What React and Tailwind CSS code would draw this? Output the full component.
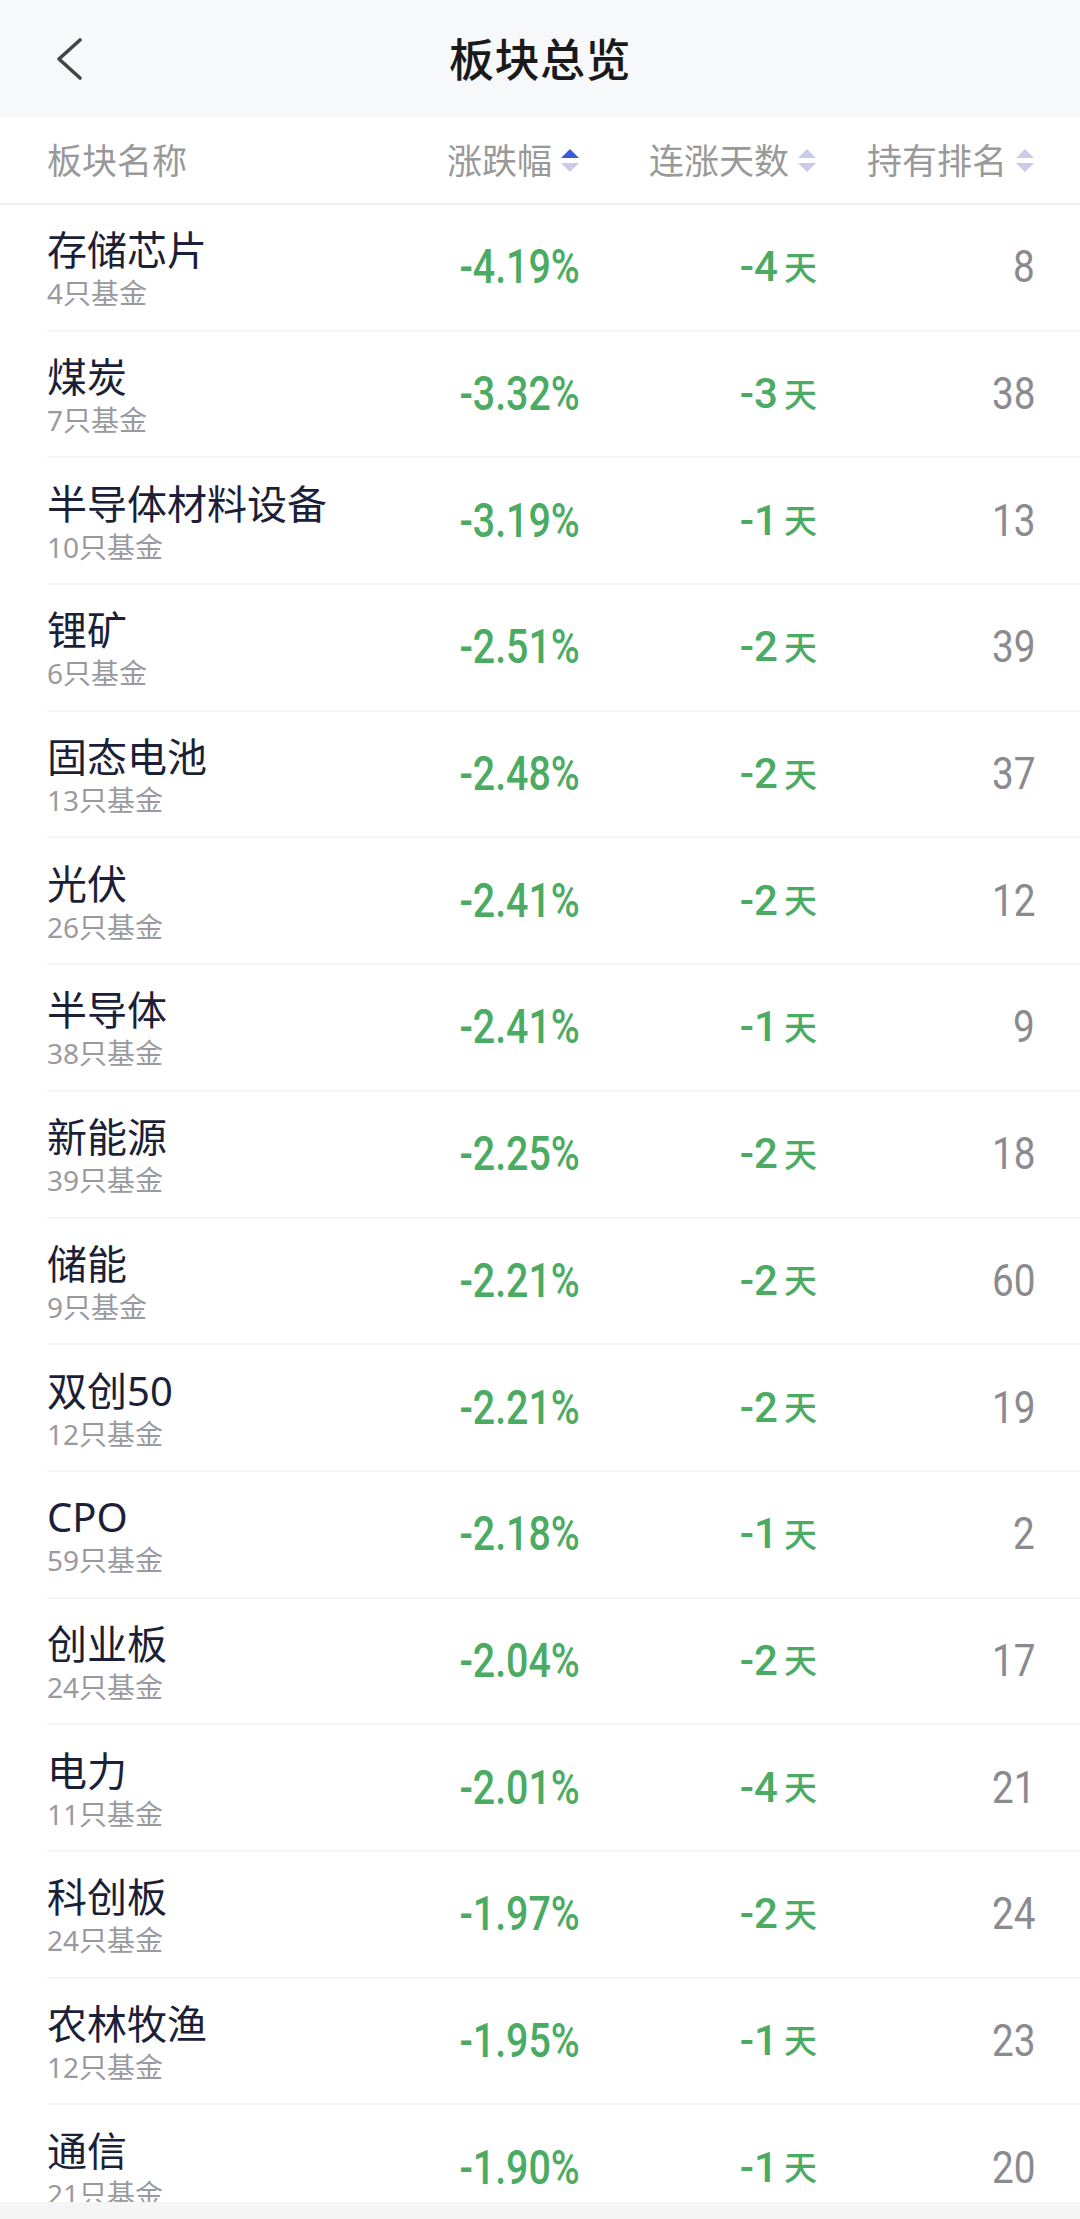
import React from "react";

const rows = [
  ["存储芯片", "4只基金", "-4.19%", "-4", "8"],
  ["煤炭", "7只基金", "-3.32%", "-3", "38"],
  ["半导体材料设备", "10只基金", "-3.19%", "-1", "13"],
  ["锂矿", "6只基金", "-2.51%", "-2", "39"],
  ["固态电池", "13只基金", "-2.48%", "-2", "37"],
  ["光伏", "26只基金", "-2.41%", "-2", "12"],
  ["半导体", "38只基金", "-2.41%", "-1", "9"],
  ["新能源", "39只基金", "-2.25%", "-2", "18"],
  ["储能", "9只基金", "-2.21%", "-2", "60"],
  ["双创50", "12只基金", "-2.21%", "-2", "19"],
  ["CPO", "59只基金", "-2.18%", "-1", "2"],
  ["创业板", "24只基金", "-2.04%", "-2", "17"],
  ["电力", "11只基金", "-2.01%", "-4", "21"],
  ["科创板", "24只基金", "-1.97%", "-2", "24"],
  ["农林牧渔", "12只基金", "-1.95%", "-1", "23"],
  ["通信", "21只基金", "-1.90%", "-1", "20"],
];

const CJK = "font-['Noto_Sans','Noto_Sans_CJK_SC',sans-serif]";
const NUM = "font-['Roboto','Noto_Sans_CJK_SC',sans-serif]";

function SortIcon({ active }) {
  return (
    <svg width="20" height="24" viewBox="0 0 20 24" className="ml-[8px] shrink-0">
      <polygon points="1,9 10,0 19,9" fill={active ? "#3d5bd6" : "#c9cbe7"} />
      <polygon points="1,14 19,14 10,23" fill="#c9cbe7" />
    </svg>
  );
}

export default function App() {
  return (
    <div className={`w-[1080px] bg-white ${CJK}`}>
      {/* Top bar */}
      <div className="h-[118px] bg-[#f7f8fa] grid grid-cols-[1fr_auto_1fr] items-center">
        <div className="pl-[56px] flex items-center">
          <svg width="28" height="42" viewBox="0 0 28 42">
            <polyline
              points="24,2 3,21 24,40"
              fill="none"
              stroke="#454545"
              strokeWidth="3.6"
              strokeLinecap="round"
              strokeLinejoin="round"
            />
          </svg>
        </div>
        <div className="text-[45px] leading-none font-medium text-[#1a1a1a] tracking-[0.5px]">板块总览</div>
        <div />
      </div>

      {/* Column header */}
      <div className="h-[87px] grid grid-cols-[1fr_200px_237px_218px] items-center pl-[47px] pr-[45px] border-b-2 border-[#f1f1f3] text-[35px] text-[#999999] leading-none">
        <div>板块名称</div>
        <div className="flex items-center justify-end">
          <span>涨跌幅</span>
          <SortIcon active />
        </div>
        <div className="flex items-center justify-end">
          <span>连涨天数</span>
          <SortIcon />
        </div>
        <div className="flex items-center justify-end">
          <span>持有排名</span>
          <SortIcon />
        </div>
      </div>

      {/* Rows */}
      <div className="pl-[47px]">
        {rows.map(([name, sub, pct, days, rank], i) => (
          <div
            key={i}
            className="h-[126.7px] grid grid-cols-[1fr_200px_237px_218px] items-center pr-[45px] border-b-2 border-[#f5f5f7]"
          >
            <div className="flex flex-col pt-[4px]">
              <div className="text-[40px] leading-[46px] text-[#1c1f38]">{name}</div>
              <div className="text-[28px] leading-[36px] text-[#9a9a9e] mt-[2px]">{sub}</div>
            </div>
            <div className="text-right">
              <span className={`inline-block origin-right scale-x-[0.82] text-[48px] leading-none font-medium text-[#4bab63] ${NUM}`}>
                {pct}
              </span>
            </div>
            <div className="flex items-center justify-end text-[#4bab63]">
              <span className={`inline-block text-[42px] leading-none font-medium ${NUM}`}>
                {days}
              </span>
              <span className="ml-[6px] text-[33px] leading-none font-medium">天</span>
            </div>
            <div className="text-right">
              <span className={`inline-block origin-right scale-x-[0.88] text-[44px] leading-none text-[#8b8b8f] ${NUM}`}>
                {rank}
              </span>
            </div>
          </div>
        ))}
      </div>

      {/* Bottom bar overlay */}
      <div className="fixed left-0 right-0 bottom-0 h-[17px] bg-[#f5f5f5]" />
    </div>
  );
}
